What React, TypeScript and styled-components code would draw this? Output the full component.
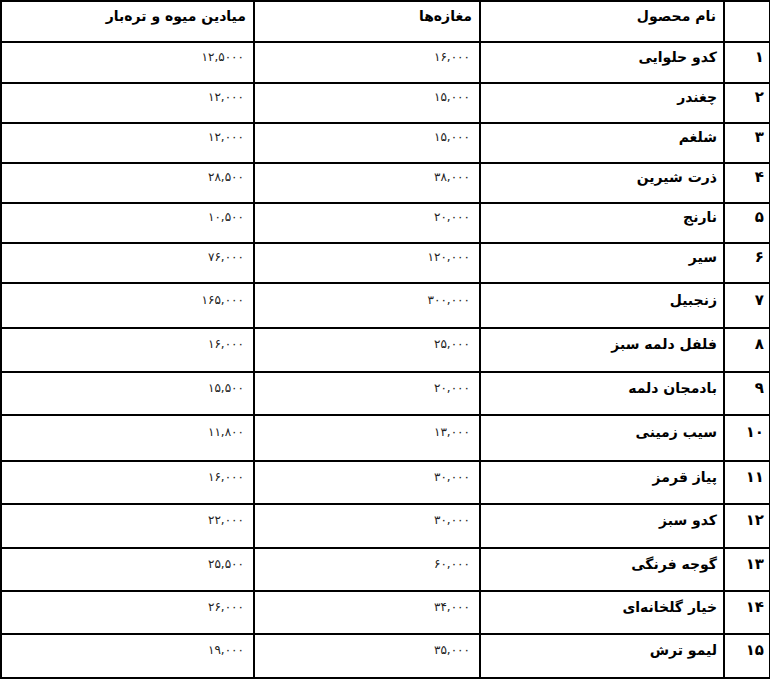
import styled, { createGlobalStyle } from "styled-components";

const GlobalStyle = createGlobalStyle`
  html, body {
    margin: 0;
    padding: 0;
    background: #fff;
  }
  body {
    font-family: "DejaVu Sans", "Noto Sans", sans-serif;
    color: #000;
  }
`;

const Table = styled.table`
  direction: rtl;
  width: 769px;
  table-layout: fixed;
  border-collapse: collapse;
  border: 2px solid #000;
`;

const Row = styled.tr<{ $h: number }>`
  height: ${(p) => p.$h}px;
`;

const Cell = styled.td`
  border: 2px solid #000;
  padding: 0 8px 12px 8px;
  vertical-align: middle;
  text-align: right;
  white-space: nowrap;
`;

const HeadCell = styled(Cell)`
  font-weight: bold;
  font-size: 14px;
  padding-right: 7px;
`;

const IndexCell = styled(Cell)`
  font-weight: bold;
  font-size: 15px;
  padding-right: 5px;
`;

const NameCell = styled(Cell)`
  font-weight: bold;
  font-size: 14px;
  padding-right: 6px;
`;

const PriceCell = styled(Cell)`
  font-size: 12px;
  color: #222;
  padding-right: 9px;
`;

interface Product {
  name: string;
  shops: string;
  markets: string;
  h: number;
}

const products: Product[] = [
  { name: "کدو حلوایی", shops: "۱۶,۰۰۰", markets: "۱۲,۵۰۰۰", h: 41 },
  { name: "چغندر", shops: "۱۵,۰۰۰", markets: "۱۲,۰۰۰", h: 40 },
  { name: "شلغم", shops: "۱۵,۰۰۰", markets: "۱۲,۰۰۰", h: 40 },
  { name: "ذرت شیرین", shops: "۳۸,۰۰۰", markets: "۲۸,۵۰۰", h: 40 },
  { name: "نارنج", shops: "۲۰,۰۰۰", markets: "۱۰,۵۰۰", h: 40 },
  { name: "سیر", shops: "۱۲۰,۰۰۰", markets: "۷۶,۰۰۰", h: 40 },
  { name: "زنجبیل", shops: "۳۰۰,۰۰۰", markets: "۱۶۵,۰۰۰", h: 45 },
  { name: "فلفل دلمه سبز", shops: "۲۵,۰۰۰", markets: "۱۶,۰۰۰", h: 44 },
  { name: "بادمجان دلمه", shops: "۲۰,۰۰۰", markets: "۱۵,۵۰۰", h: 43 },
  { name: "سیب زمینی", shops: "۱۳,۰۰۰", markets: "۱۱,۸۰۰", h: 46 },
  { name: "پیاز قرمز", shops: "۳۰,۰۰۰", markets: "۱۶,۰۰۰", h: 43 },
  { name: "کدو سبز", shops: "۳۰,۰۰۰", markets: "۲۲,۰۰۰", h: 44 },
  { name: "گوجه فرنگی", shops: "۶۰,۰۰۰", markets: "۲۵,۵۰۰", h: 43 },
  { name: "خیار گلخانه‌ای", shops: "۳۴,۰۰۰", markets: "۲۶,۰۰۰", h: 43 },
  { name: "لیمو ترش", shops: "۳۵,۰۰۰", markets: "۱۹,۰۰۰", h: 44 },
];

const toPersian = (n: number) =>
  String(n).replace(/\d/g, (d) => "۰۱۲۳۴۵۶۷۸۹"[Number(d)]);

export default function App() {
  return (
    <>
      <GlobalStyle />
      <Table>
        <colgroup>
          <col style={{ width: 46 }} />
          <col style={{ width: 244 }} />
          <col style={{ width: 226 }} />
          <col style={{ width: 253 }} />
        </colgroup>
        <tbody>
          <Row $h={41}>
            <HeadCell />
            <HeadCell>نام محصول</HeadCell>
            <HeadCell>مغازه‌ها</HeadCell>
            <HeadCell>میادین میوه و تره‌بار</HeadCell>
          </Row>
          {products.map((p, i) => (
            <Row key={p.name} $h={p.h}>
              <IndexCell>{toPersian(i + 1)}</IndexCell>
              <NameCell>{p.name}</NameCell>
              <PriceCell>{p.shops}</PriceCell>
              <PriceCell>{p.markets}</PriceCell>
            </Row>
          ))}
        </tbody>
      </Table>
    </>
  );
}
